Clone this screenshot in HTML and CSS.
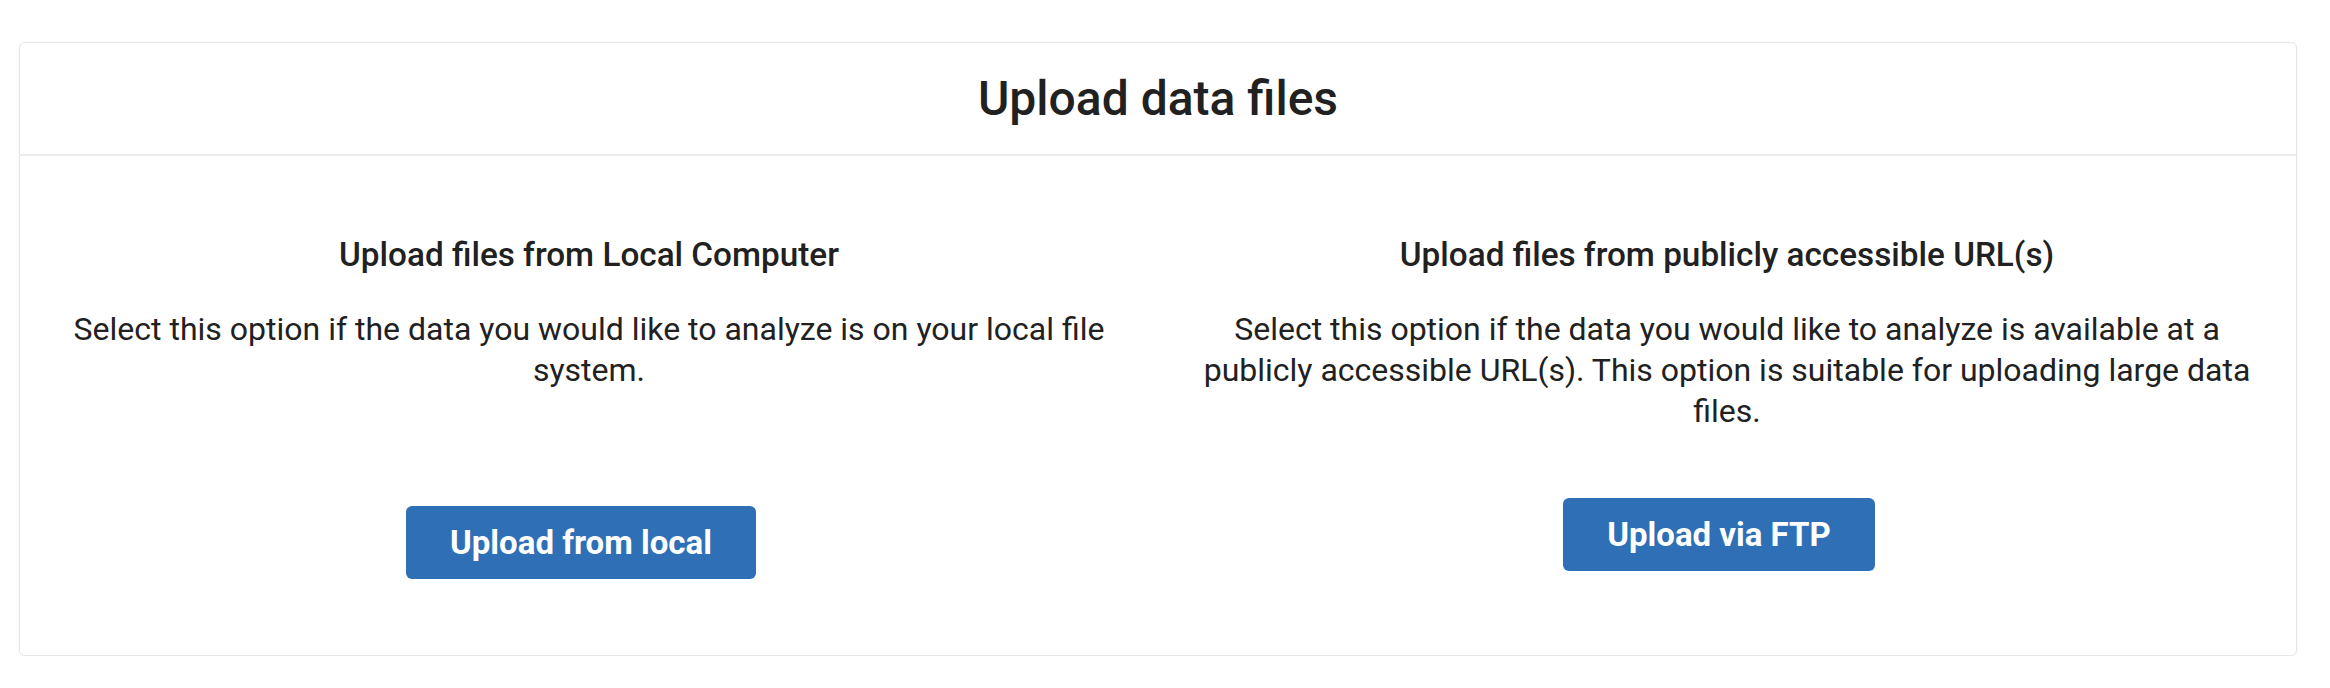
FILE: index.html
```html
<!DOCTYPE html>
<html lang="en">
<head>
<meta charset="utf-8">
<title>Upload data files</title>
<link rel="stylesheet" href="styles.css">
</head>
<body>
<section class="card">
  <header class="card-header">
    <h1 class="card-title">Upload data files</h1>
  </header>
  <div class="card-body">
    <div class="option option-local">
      <h2 class="option-title">Upload files from Local Computer</h2>
      <p class="option-text">Select this option if the data you would like to analyze is on your local file system.</p>
      <button class="btn">Upload from local</button>
    </div>
    <div class="option option-url">
      <h2 class="option-title">Upload files from publicly accessible URL(s)</h2>
      <p class="option-text">Select this option if the data you would like to analyze is available at a publicly accessible URL(s). This option is suitable for uploading large data files.</p>
      <button class="btn">Upload via FTP</button>
    </div>
  </div>
</section>
</body>
</html>
```
FILE: styles.css
```css
html, body {
  margin: 0;
  padding: 0;
  background: #ffffff;
}
body {
  font-family: Roboto, "Liberation Sans", Arial, sans-serif;
  color: #212121;
}
.card {
  margin: 42px 33px 0 19px;
  border: 1px solid #e6e6e6;
  border-radius: 6px;
  box-shadow: 0 1px 3px rgba(0, 0, 0, 0.06);
  background: #fff;
}
.card-header {
  height: 113px;
  box-sizing: border-box;
  padding-top: 28px;
  border-bottom: 2px solid #ececec;
  text-align: center;
}
.card-title {
  margin: 0;
  font-size: 48px;
  line-height: 56px;
  font-weight: 500;
}
.card-body {
  display: grid;
  grid-template-columns: 1fr 1fr;
  padding: 80px 0 76px;
}
.option {
  display: flex;
  flex-direction: column;
  align-items: center;
  text-align: center;
  padding: 0 30px;
}
.option-title {
  margin: 0;
  font-size: 33.3px;
  line-height: 38px;
  font-weight: 500;
}
.option-text {
  margin: 35px 0 0;
  font-size: 32px;
  line-height: 41px;
  font-weight: 400;
}
.btn {
  margin-right: 16px;
  height: 73px;
  padding: 0 44px;
  border: 0;
  border-radius: 6px;
  background: #2e6fb6;
  color: #fff;
  font-family: Roboto, "Liberation Sans", Arial, sans-serif;
  font-size: 33px;
  line-height: 73px;
  font-weight: 700;
}
.option-local .btn {
  margin-top: 115px;
}
.option-url .btn {
  margin-top: 66px;
}
```
